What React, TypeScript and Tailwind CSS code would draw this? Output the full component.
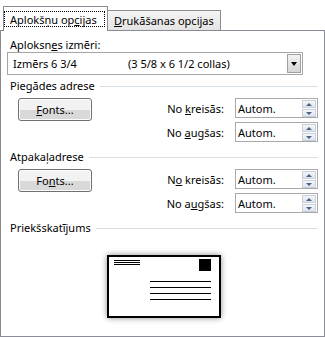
import React from "react";

const font = { fontFamily: '"Noto Sans", "Segoe UI", Arial, sans-serif' };

//Section title + thin line
function SectionHeader({ title }: { title: string }) {
  return (
    <div className="flex items-center h-[14px] pl-[9px] pr-[6px]">
      <span className="leading-[14px] whitespace-nowrap">{title}</span>
      <div className="flex-1 h-px bg-[#d5dfe5] ml-[5px] mt-px" />
    </div>
  );
}

function FontsButton({ children }: { children: React.ReactNode }) {
  return (
    <button className="w-[74px] h-[23px] ml-[17px] rounded-[3px] border border-[#707070] bg-linear-to-b from-[#f2f2f2] from-50% to-[#d9d9d9] to-50% flex items-center justify-center leading-none shadow-[inset_0_0_0_1px_#fcfcfc]">
      {children}
    </button>
  );
}

function SpinBox() {
  return (
    <div className="relative w-[83px] h-[20px] border border-[#a9a9a9] bg-white flex items-center pl-[2px]">
      <span className="leading-none">Autom.</span>
      <div className="absolute right-px top-px flex flex-col gap-px">
        <div className="w-[14px] h-[8px] border border-[#c7cfd9] bg-linear-to-b from-[#f4f6f9] to-[#dde4ec] flex items-center justify-center">
          <div className="w-0 h-0 border-l-[3px] border-r-[3px] border-b-[3px] border-l-transparent border-r-transparent border-b-[#4d6185]" />
        </div>
        <div className="w-[14px] h-[8px] border border-[#c7cfd9] bg-linear-to-b from-[#f4f6f9] to-[#dde4ec] flex items-center justify-center">
          <div className="w-0 h-0 border-l-[3px] border-r-[3px] border-t-[3px] border-l-transparent border-r-transparent border-t-[#4d6185]" />
        </div>
      </div>
    </div>
  );
}

function SpinRow({ label }: { label: React.ReactNode }) {
  return (
    <div className="flex items-center justify-end gap-[11px]">
      <span className="leading-none whitespace-nowrap">{label}</span>
      <SpinBox />
    </div>
  );
}

function AddressRow({
  button,
  left,
  top,
}: {
  button: React.ReactNode;
  left: React.ReactNode;
  top: React.ReactNode;
}) {
  return (
    <div className="flex items-start justify-between pr-[6px]">
      <FontsButton>{button}</FontsButton>
      <div className="flex flex-col gap-[4px]">
        <SpinRow label={left} />
        <SpinRow label={top} />
      </div>
    </div>
  );
}

function Envelope() {
  return (
    <div className="ml-[106px] w-[114px] h-[63px] border-2 border-black bg-white shadow-[0_0_6px_rgba(0,0,0,0.45)] flex flex-col">
      <div className="flex justify-between pl-[5px] pr-[8px] pt-[2px]">
        <div className="flex flex-col gap-px pt-px">
          <div className="w-[26px] h-px bg-black" />
          <div className="w-[26px] h-px bg-black" />
          <div className="w-[26px] h-px bg-black" />
        </div>
        <div className="w-[12px] h-[12px] bg-black" />
      </div>
      <div className="flex flex-col items-end gap-[5px] pr-[8px] mt-[10px]">
        <div className="w-[61px] h-px bg-black" />
        <div className="w-[61px] h-px bg-black" />
        <div className="w-[61px] h-px bg-black" />
        <div className="w-[61px] h-px bg-black" />
      </div>
    </div>
  );
}

export default function App() {
  return (
    <div
      style={font}
      className="w-[325px] h-[337px] bg-white text-[11px] text-black flex flex-col overflow-hidden whitespace-nowrap"
    >
      {/* Tabs */}
      <div className="flex items-end h-[31px] -mb-px pl-[3px]">
        <div className="relative z-10 w-[105px] h-[25px] border border-b-0 border-[#898c95] bg-white pt-[4px]">
          <div className="w-[101px] h-[16px] border border-dotted border-black flex items-center pl-[5px] leading-none">
            Aplokšņu op<u>c</u>ijas
          </div>
        </div>
        <div className="w-[113px] h-[21px] border border-l-0 border-[#898c95] bg-linear-to-b from-[#f4f4f4] to-[#e4e4e4] flex items-center pl-[6px] leading-none">
          <u>D</u>rukāšanas opcijas
        </div>
      </div>

      {/* Panel */}
      <div className="flex-1 border border-[#898c95] bg-white flex flex-col">
        <div className="pl-[9px] pt-[7px] leading-[14px]">
          Aploksn<u>e</u>s izmēri:
        </div>
        <div className="ml-[6px] w-[296px] h-[23px] border border-[#a5a5a5] flex items-center relative">
          <span className="pl-[5px] w-[120px] leading-none">Izmērs 6 3/4</span>
          <span className="leading-none">(3 5/8 x 6 1/2 collas)</span>
          <div className="absolute right-px top-px w-[14px] h-[19px] border border-[#a0a0a0] bg-linear-to-b from-[#f2f2f2] to-[#d6d6d6] flex items-center justify-center">
            <div className="w-0 h-0 border-l-[3px] border-r-[3px] border-t-[4px] border-l-transparent border-r-transparent border-t-black" />
          </div>
        </div>

        <div className="mt-[4px]">
          <SectionHeader title="Piegādes adrese" />
        </div>
        <div className="mt-[5px]">
          <AddressRow
            button={
              <>
                <u>F</u>onts...
              </>
            }
            left={
              <>
                No <u>k</u>reisās:
              </>
            }
            top={
              <>
                No <u>a</u>ugšas:
              </>
            }
          />
        </div>

        <div className="mt-[8px]">
          <SectionHeader title="Atpakaļadrese" />
        </div>
        <div className="mt-[5px]">
          <AddressRow
            button={
              <>
                Fo<u>n</u>ts...
              </>
            }
            left={
              <>
                N<u>o</u> kreisās:
              </>
            }
            top={
              <>
                No a<u>u</u>gšas:
              </>
            }
          />
        </div>

        <div className="mt-[8px]">
          <SectionHeader title="Priekšskatījums" />
        </div>
        <div className="mt-[20px]">
          <Envelope />
        </div>
      </div>
    </div>
  );
}
